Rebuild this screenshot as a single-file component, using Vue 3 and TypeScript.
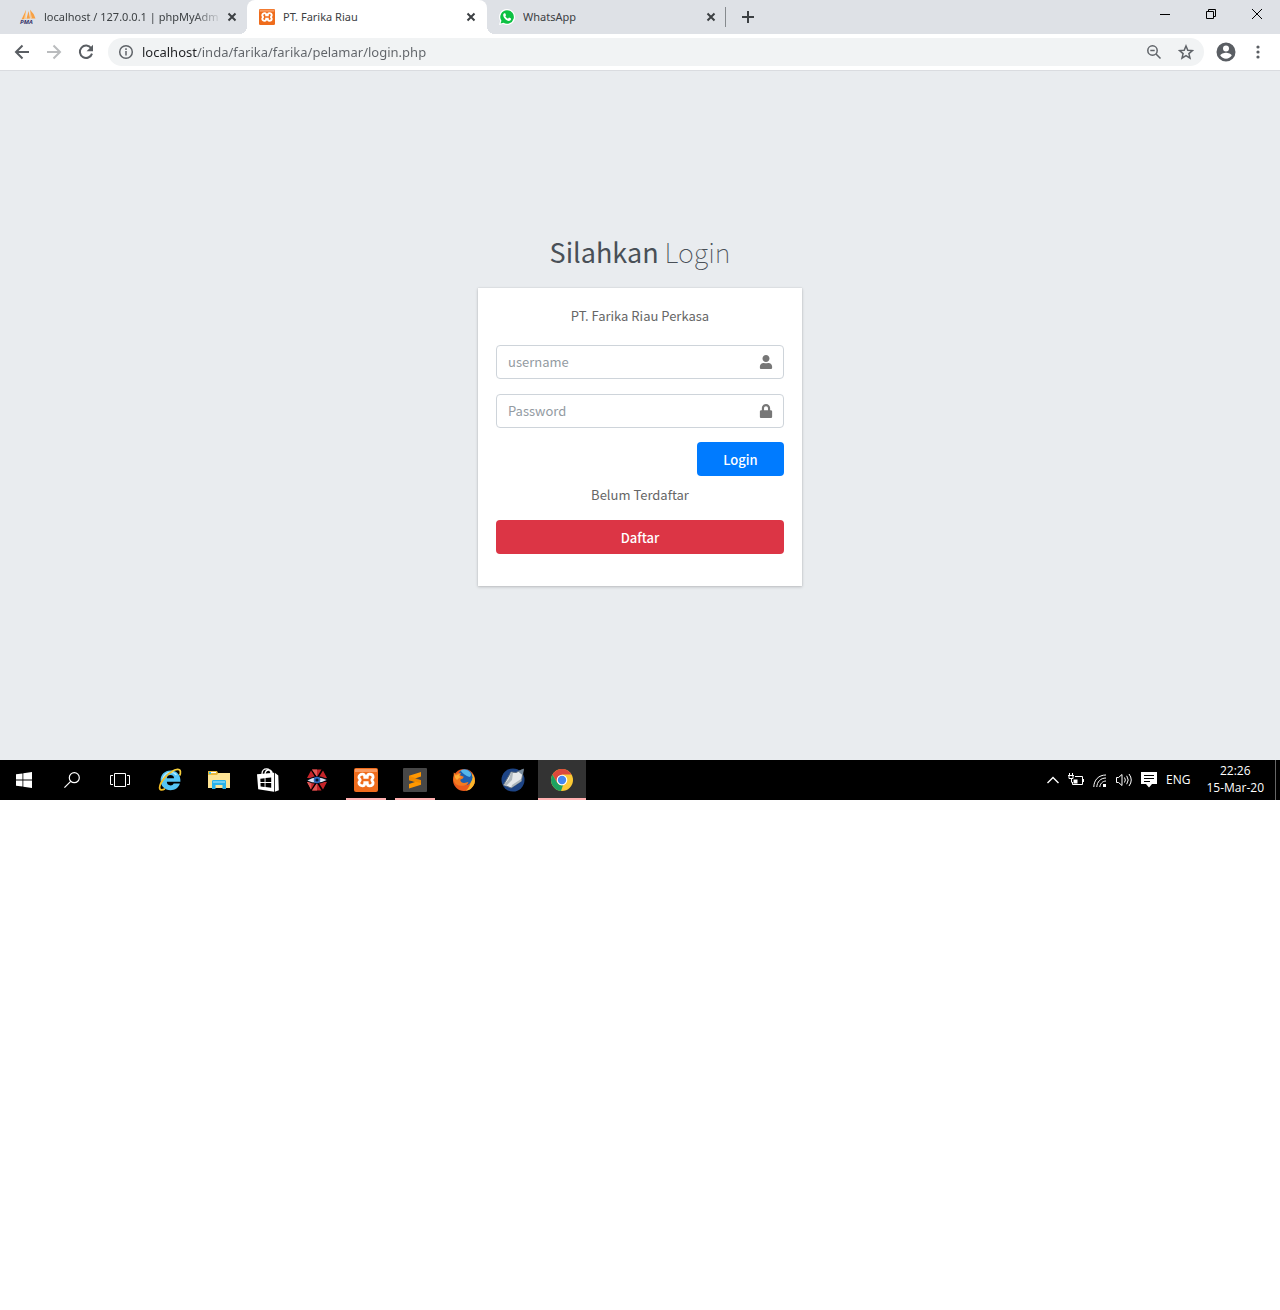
<script setup lang="ts">
import { ref } from 'vue'

const address = ref('localhost/inda/farika/farika/pelamar/login.php')
const username = ref('')
const password = ref('')
</script>

<template>
  <div class="desktop">
    <header class="browser">
      <nav class="tabs" aria-label="Tabs">
        <div class="tab first">
          <svg class="favicon" viewBox="0 0 16 16" aria-hidden="true">
            <path d="M6 1 1.500 10.500 6 9.800zM8.500 2 6.500 9.800 10 9.600zM10 0.800Q14.500 5 15.500 9.600L10.800 9.600z" fill="#f7a043" />
            <path d="M6 1 4 10.200 6 9.800zM10 .8 12 9.600h-1.200z" fill="#fbd09a" />
            <text x="0" y="15" class="pma">PMA</text>
          </svg>
          <a class="title faded" href="#phpmyadmin">localhost / 127.0.0.1 | phpMyAdmin</a>
          <button class="close" type="button" aria-label="Close tab">
            <svg viewBox="0 0 10 10"><path d="M1.500 1.500l7 7m0-7l-7 7" /></svg>
          </button>
        </div>
        <div class="tab active">
          <svg class="favicon" viewBox="0 0 24 24" aria-hidden="true">
            <use href="#xampp" />
          </svg>
          <a class="title" href="#login">PT. Farika Riau</a>
          <button class="close" type="button" aria-label="Close tab">
            <svg viewBox="0 0 10 10"><path d="M1.500 1.500l7 7m0-7l-7 7" /></svg>
          </button>
        </div>
        <div class="tab">
          <svg class="favicon" viewBox="0 0 16 16" aria-hidden="true">
            <path d="M8 0a8 8 0 1 1-3.800 15L0 16l1.100-4A8 8 0 0 1 8 0z" fill="#fff" />
            <path d="M8 1.200a6.800 6.800 0 1 1-3.500 12.600L1.600 14.500l.8-2.800A6.800 6.800 0 0 1 8 1.200z" fill="#0dc143" />
            <path d="M5.300 4.200h.9l.9 2-.8 1.100c.7 1.200 1.500 1.900 2.700 2.400l1-1.100 2 1c.2 1.400-1 2.300-2.200 2.300C7.200 11.700 4.200 8.600 4.200 6c0-.8.500-1.500 1.100-1.800z" fill="#fff" />
          </svg>
          <a class="title" href="#whatsapp">WhatsApp</a>
          <button class="close" type="button" aria-label="Close tab">
            <svg viewBox="0 0 10 10"><path d="M1.500 1.500l7 7m0-7l-7 7" /></svg>
          </button>
        </div>
        <button class="new-tab" type="button" aria-label="New tab">
          <svg viewBox="0 0 12 12"><path d="M6 0v12M0 6h12" /></svg>
        </button>
        <div class="window-controls">
          <button type="button" aria-label="Minimize">
            <svg viewBox="0 0 12 12"><path d="M1 6.500h10" /></svg>
          </button>
          <button type="button" aria-label="Restore">
            <svg viewBox="0 0 12 12"><path d="M1.500 3.500h7v7h-7zM3.500 3.500v-2h7v7h-2" /></svg>
          </button>
          <button type="button" aria-label="Close window">
            <svg viewBox="0 0 12 12"><path d="M1 1l10 10M11 1L1 11" /></svg>
          </button>
        </div>
      </nav>

      <div class="toolbar">
        <button class="tool" type="button" aria-label="Back">
          <svg viewBox="0 0 16 16"><path d="M15 8H2M8.500 1.500L2 8l6.500 6.500" /></svg>
        </button>
        <button class="tool off" type="button" aria-label="Forward" disabled>
          <svg viewBox="0 0 16 16"><path d="M1 8h13M7.500 1.500L14 8l-6.500 6.500" /></svg>
        </button>
        <button class="tool" type="button" aria-label="Reload">
          <svg viewBox="0 0 16 16">
            <path d="M13.200 4.300A6.200 6.200 0 1 0 14 9.600" />
            <path d="M15 .8v6.400H8.600z" fill="#5a5e63" stroke="none" />
          </svg>
        </button>
        <div class="omnibox">
          <svg class="glyph" viewBox="0 0 16 16" aria-hidden="true">
            <circle cx="8" cy="8" r="6.300" />
            <path d="M8 7v4.500M8 4.300v1.600" />
          </svg>
          <input v-model="address" class="address" type="text" aria-label="Address" spellcheck="false" />
          <svg class="glyph" viewBox="0 0 16 16" aria-hidden="true">
            <circle cx="6.500" cy="6.500" r="4.700" />
            <path d="M10 10l4.500 4.500M4.300 6.500h4.400" />
          </svg>
          <svg class="glyph" viewBox="0 0 16 16" aria-hidden="true">
            <path d="M8 2l1.800 4.200 4.600.4-3.500 3 1.100 4.500L8 11.700l-4 2.400 1.100-4.500-3.500-3 4.600-.4z" />
          </svg>
        </div>
        <button class="profile" type="button" aria-label="Profile">
          <svg viewBox="0 0 20 20">
            <path
              fill-rule="evenodd"
              d="M10 .5a9.500 9.500 0 1 0 0 19 9.500 9.500 0 0 0 0-19zM10 3.400a3 3 0 1 1 0 6 3 3 0 0 1 0-6zM10 16.700c-2.400 0-4.500-1.200-5.700-3.100 0-1.900 3.800-2.900 5.700-2.900s5.700 1 5.700 2.900A6.800 6.800 0 0 1 10 16.700z"
            />
          </svg>
        </button>
        <button class="menu" type="button" aria-label="Menu">
          <svg viewBox="0 0 4 16">
            <circle cx="2" cy="3" r="1.600" /><circle cx="2" cy="8" r="1.600" /><circle cx="2" cy="13" r="1.600" />
          </svg>
        </button>
      </div>
    </header>

    <main class="page">
      <h1 class="heading"><b>Silahkan</b> Login</h1>
      <form class="card" @submit.prevent>
        <p class="note">PT. Farika Riau Perkasa</p>
        <label class="field">
          <input v-model="username" type="text" placeholder="username" aria-label="username" />
          <svg viewBox="0 0 448 512" aria-hidden="true">
            <path d="M224 256c70.700 0 128-57.300 128-128S294.700 0 224 0 96 57.300 96 128s57.300 128 128 128zm89.600 32h-16.700c-22.200 10.200-46.900 16-72.900 16s-50.600-5.800-72.900-16h-16.700C60.200 288 0 348.200 0 422.400V464c0 26.500 21.500 48 48 48h352c26.500 0 48-21.500 48-48v-41.600c0-74.200-60.200-134.400-134.400-134.400z" />
          </svg>
        </label>
        <label class="field">
          <input v-model="password" type="password" placeholder="Password" aria-label="Password" />
          <svg viewBox="0 0 448 512" aria-hidden="true">
            <path d="M400 224h-24v-72C376 68.200 307.800 0 224 0S72 68.200 72 152v72H48c-26.500 0-48 21.500-48 48v192c0 26.500 21.500 48 48 48h352c26.500 0 48-21.500 48-48V272c0-26.500-21.500-48-48-48zm-104 0H152v-72c0-39.700 32.300-72 72-72s72 32.300 72 72v72z" />
          </svg>
        </label>
        <button class="btn primary" type="submit">Login</button>
        <p class="note register">Belum Terdaftar</p>
        <button class="btn danger" type="button">Daftar</button>
      </form>
    </main>

    <footer class="taskbar">
      <button class="task" type="button" aria-label="Start">
        <svg width="16" height="16" viewBox="0 0 16 16" fill="#fff">
          <path d="M0 2.300l6.500-.9v6.200H0zM7.300 1.300L16 0v7.600H7.300zM0 8.400h6.500v6.200L0 13.700zM7.300 8.400H16V16l-8.700-1.300z" />
        </svg>
      </button>
      <button class="task" type="button" aria-label="Search">
        <svg width="16" height="16" viewBox="0 0 16 16" fill="none" stroke="#fff" stroke-width="1.200">
          <circle cx="10.300" cy="5.700" r="5" /><path d="M6.700 9.300L.4 15.600" />
        </svg>
      </button>
      <button class="task view" type="button" aria-label="Task view">
        <svg width="20" height="14" viewBox="0 0 20 14" fill="none" stroke="#fff">
          <path d="M4.500.5h11v13h-11zM3 2.500H.5v9H3M17 2.500h2.500v9H17" />
        </svg>
      </button>
      <button class="task" type="button" aria-label="Internet Explorer">
        <svg width="24" height="24" viewBox="0 0 24 24">
          <path d="M12.500 2.500C6.600 2.500 2.600 6.900 2.600 12.300c0 5.700 4 9.900 9.900 9.900 4.500 0 8.200-2.500 9.400-6.700h-6.200c-.6 1.200-1.600 1.900-3.200 1.900-2.200 0-3.600-1.400-3.700-3.600h13.600c.5-6.700-3.400-11.300-9.900-11.300zM8.800 10.200c.3-2 1.600-3.200 3.700-3.200s3.400 1.200 3.600 3.200z" fill="#55c5f5" fill-rule="evenodd" />
          <path d="M4.800 11.500C5.700 7.200 8.700 4.400 12.500 4.400c2.700 0 4.600 1 5.900 2.600" fill="none" stroke="#b5eaff" stroke-width="1.400" />
          <path d="M14.500 3.300C9 6 2 14 1.600 19.500c-.1 3.100 2.700 2.900 5.400 1.300" fill="none" stroke="#f4bd24" stroke-width="1.700" />
          <path d="M13.500 3.700c4.500-3 8.400-3 8.900-.2.200 1.300-.1 2.700-.8 4" fill="none" stroke="#f7cf3c" stroke-width="1.700" />
        </svg>
      </button>
      <button class="task" type="button" aria-label="File Explorer">
        <svg width="22" height="20" viewBox="0 0 22 20">
          <path d="M0 1h9l1 2h12v15H0z" fill="#e9b93c" />
          <path d="M1 2h2v2H1z" fill="#39c1e9" /><path d="M3 2h5v1H3z" fill="#fff" />
          <path d="M0 5h9l1.500-2H22v15H0z" fill="#fde394" />
          <path d="M4 19v-7.500c0-1 .5-1.500 1.500-1.500h11c1 0 1.500.5 1.500 1.500V19h-3.500v-4h-7v4z" fill="#29b2e9" />
          <path d="M5 11h12v2H5z" fill="#6ccef3" />
        </svg>
      </button>
      <button class="task" type="button" aria-label="Store">
        <svg width="22" height="24" viewBox="0 0 22 24">
          <path d="M5 6C5 2.500 7 .9 9.500.9s4 1.600 4.500 4.600M8 6.200C8.200 3.200 9.800 2 11.700 2s3.300 1.200 3.700 4" fill="none" stroke="#fff" stroke-width="1.300" />
          <path d="M0 6.300l17-1.600v19L1.200 21.300zM17.800 4.800l3.500 2.800.5 14.600-4 1.500z" fill="#fff" />
          <path d="M3.300 10.700l4.300-.5v3.900H3.500zM8.500 10.100l5.700-.7v4.700H8.500zM3.500 15h4.100v3.900l-4-.5zM8.500 15h5.700v4.700l-5.700-.7z" fill="#000" />
        </svg>
      </button>
      <button class="task" type="button" aria-label="Viewer">
        <svg width="22" height="22" viewBox="0 0 22 22">
          <path d="M6 0.500h9.500L11 8zM5 1.500L10 9.500 1 9zM17 1.500L21 9l-9 .5zM5 20.500L1 13l9-.5zM17 20.500l-5-8 9 .5zM6 21.500h9.500L11 14z" fill="#c52429" />
          <path d="M6 .5h5V8zM6 21.500l5-7.500v7.500zM5 20.500L1 13l4.500.2z" fill="#de5956" />
          <path d="M0 11.300Q5 7.500 11 7.200t11 3.600Q17 14.600 11 14.800T0 11.300z" fill="#080c18" />
          <path d="M1.500 11.400Q6 8.700 11 8.500t9.500 2.500Q16 13.500 11 13.600T1.500 11.400z" fill="#dce5f4" />
          <circle cx="11" cy="11" r="3.300" fill="#2d69c0" /><circle cx="11" cy="11" r="1.600" fill="#06162e" />
        </svg>
      </button>
      <button class="task running" type="button" aria-label="XAMPP">
        <svg width="24" height="24" viewBox="0 0 24 24">
          <g id="xampp">
            <rect width="24" height="24" rx="2" fill="#ef6c1c" />
            <path d="M1 1h22v3H1z" fill="#f99a60" />
            <path d="M8.500 6.200c2 0 2.300 1.600 2.300 3.100h2.400c0-1.500.3-3.100 2.300-3.100 2 0 3.600 1.100 3.600 3 0 1.500-1.300 1.900-1.300 2.800s1.300 1.300 1.300 2.800c0 1.900-1.600 3-3.600 3-2 0-2.300-1.600-2.300-3.100h-2.400c0 1.500-.3 3.100-2.300 3.100-2 0-3.600-1.100-3.600-3 0-1.500 1.300-1.900 1.300-2.800S4.900 10.700 4.900 9.200c0-1.900 1.600-3 3.600-3z" fill="none" stroke="#fff" stroke-width="2.800" />
          </g>
        </svg>
      </button>
      <button class="task running" type="button" aria-label="Sublime Text">
        <svg width="24" height="24" viewBox="0 0 24 24">
          <rect width="24" height="24" rx="1" fill="#474747" />
          <path d="M18 4v4.500l-6 1.900 6 1.900v4.400L6 20.500V16l6-1.900-6-1.900V7.700z" fill="#ff9800" />
          <path d="M6 7.700l12 4.300v3L6 12.200z" fill="#e07b00" opacity=".5" />
        </svg>
      </button>
      <button class="task" type="button" aria-label="Firefox">
        <svg width="24" height="24" viewBox="0 0 24 24">
          <circle cx="12" cy="12" r="11" fill="#ea5a1c" />
          <path d="M19.500 5q4.500 5 3 10.500-2.500 6.500-9 7.300Q19 18.500 18.500 12z" fill="#fbb62a" />
          <ellipse cx="13" cy="9.300" rx="7.500" ry="8" fill="#1c5fae" />
          <path d="M8.500 2.600Q14-.5 18.500 4.500 20 8 17.500 9 12 7.500 8.500 2.600z" fill="#55b7ea" />
          <path d="M1.800 4.500L4 6.200Q6.200 4.600 9 5L8 7.200l3.800 1.500-1 1.800-2.600 1.300q.6 3.200 4 3.200l4.300-1q-1 3.600-5.500 3.800Q3.500 18.500 1.500 12z" fill="#f47a20" />
          <path d="M2.500 6.500L4 7.500q2-1.500 4-1.500L7 8l2.500 1-2.500 1-2 2q-2.500-2-2.500-5.500z" fill="#fdaf38" />
        </svg>
      </button>
      <button class="task" type="button" aria-label="Editor">
        <svg width="24" height="24" viewBox="0 0 24 24">
          <circle cx="12" cy="12" r="11.500" fill="#1d4485" />
          <path d="M10 4l5 .5L22.500 1l-2 12L10 20l-7.500-3z" fill="#e5e8ea" stroke="#5f6d7b" />
          <path d="M10 4l-2 7-5.500 6 2.500 1 6-6 1-7zM10 20l1-3 9-6 .5 2z" fill="#aeb7bd" />
          <path d="M17 3.500L22.500 1l-1 6z" fill="#778b9d" />
        </svg>
      </button>
      <button class="task current" type="button" aria-label="Chrome">
        <svg width="24" height="24" viewBox="0 0 24 24">
          <circle cx="12" cy="12" r="11" fill="#fbc934" />
          <path d="M2.500 6.500A11 11 0 0 1 21.500 6.500H12L7.200 14.800z" fill="#dc493c" />
          <path d="M2.500 6.500l4.700 8.300A5.500 5.500 0 0 0 13 17.300L11 23A11 11 0 0 1 2.500 6.500z" fill="#1ca261" />
          <circle cx="12" cy="12" r="5.300" fill="#fff" /><circle cx="12" cy="12" r="4.200" fill="#4587ed" />
        </svg>
      </button>

      <div class="tray">
        <svg width="12" height="8" viewBox="0 0 12 8" stroke-width="1.400"><path d="M.5 7L6 1.500 11.500 7" /></svg>
        <svg width="16" height="14" viewBox="0 0 16 14">
          <path d="M7 3.500h7.500v8h-10V9M15.500 6v3M1.500 0v2.500M4.500 0v2.500M0 2.500h6M1 3v2.500h4V3M3.500 5.500v4" />
          <path d="M5.500 6.500h4v4h-4z" fill="#fff" stroke="none" />
        </svg>
        <svg width="14" height="16" viewBox="0 0 14 16">
          <path d="M.8 15C1 8 5.500 3 13 3M3.800 15C4 10 7.500 6 13 6M6.800 15C7 12 9.500 9 13 9" />
          <path d="M10 12h3v3h-3z" fill="#fff" stroke="none" />
        </svg>
        <svg width="16" height="14" viewBox="0 0 16 14">
          <path d="M.5 4.500h2L6 1.500v11l-3.500-3h-2zM8.500 4.500q1.700 2.500 0 5M10.700 2.800q3 4.200 0 8.400M13 1q4.500 6 0 12" />
        </svg>
        <svg width="16" height="16" viewBox="0 0 16 16">
          <path d="M0 0h16v12h-5l-3 3.500L5 12H0z" fill="#fff" stroke="none" />
          <path d="M3 3.500h10M3 6.500h10M3 9.500h6" stroke="#000" />
        </svg>
        <span class="lang">ENG</span>
        <time class="clock" datetime="2020-03-15T22:26">22:26<br />15-Mar-20</time>
      </div>
    </footer>
  </div>
</template>

<style>
body {
  margin: 0;
  background: #fff;
}
</style>

<style scoped>
.desktop {
  font-family: 'Noto Sans', 'Open Sans', sans-serif;
  font-size: 11px;
  color: #3c4043;
}

button {
  display: flex;
  align-items: center;
  justify-content: center;
  padding: 0;
  border: 0;
  background: none;
  font: inherit;
  color: inherit;
}

svg {
  display: block;
  flex: none;
}

.tabs {
  display: flex;
  height: 34px;
  background: #dee1e6;
}

.tab {
  box-sizing: border-box;
  display: flex;
  align-items: center;
  gap: 8px;
  width: 240px;
  padding: 0 11px 0 12px;
}

.tab.first {
  width: 247px;
  padding: 0 10px 0 20px;
}

.tab.active {
  position: relative;
  background: #fff;
  border-radius: 8px 8px 0 0;
}

.tab.active::before,
.tab.active::after {
  content: '';
  position: absolute;
  bottom: 0;
  width: 8px;
  height: 8px;
}

.tab.active::before {
  right: 100%;
  background: radial-gradient(circle at 0 0, #dee1e6 8px, #fff 8px);
}

.tab.active::after {
  left: 100%;
  background: radial-gradient(circle at 100% 0, #dee1e6 8px, #fff 8px);
}

.favicon {
  width: 16px;
  height: 16px;
  overflow: visible;
}

.pma {
  font: italic bold 6px 'Open Sans', sans-serif;
  fill: #34346a;
}

.title {
  flex: 1;
  overflow: hidden;
  white-space: nowrap;
  line-height: 18px;
  color: #3c4043;
  text-decoration: none;
}

.title.faded {
  mask-image: linear-gradient(90deg, #000 150px, transparent 178px);
}

.close svg {
  width: 10px;
  height: 10px;
  fill: none;
  stroke: #3c4043;
  stroke-width: 2;
}

.new-tab {
  align-self: center;
  width: 45px;
  height: 20px;
  border-left: 1px solid #868a8e;
  margin-left: -2px;
}

.new-tab svg {
  width: 12px;
  height: 12px;
  fill: none;
  stroke: #3c4043;
  stroke-width: 2;
}

.window-controls {
  display: flex;
  height: 28px;
  margin-left: auto;
}

.window-controls button {
  width: 46px;
}

.window-controls svg {
  width: 12px;
  height: 12px;
  fill: none;
  stroke: #000;
}

.toolbar {
  display: flex;
  align-items: center;
  height: 36px;
  padding: 0 12px 0 14px;
  background: #fff;
  border-bottom: 1px solid #dadce0;
}

.tool {
  margin-right: 16px;
}

.tool svg {
  width: 16px;
  height: 16px;
  fill: none;
  stroke: #5a5e63;
  stroke-width: 2;
}

.tool.off svg {
  stroke: #babcbe;
}

.omnibox {
  box-sizing: border-box;
  flex: 1;
  display: flex;
  align-items: center;
  gap: 16px;
  height: 28px;
  margin-right: 12px;
  padding: 0 10px;
  background: #f1f3f4;
  border-radius: 14px;
  margin-left: -2px;
}

.glyph {
  width: 16px;
  height: 16px;
  fill: none;
  stroke: #5f6368;
  stroke-width: 1.5;
}

.address {
  flex: 1;
  min-width: 0;
  height: 20px;
  margin-left: -8px;
  padding: 0;
  border: 0;
  outline: 0;
  font: 13px/20px 'Noto Sans', 'Open Sans', sans-serif;
  color: transparent;
  background: linear-gradient(90deg, #202124 55px, #5f6368 55px) text;
}

.profile svg {
  width: 20px;
  height: 20px;
  fill: #5a5e63;
}

.menu {
  width: 20px;
  margin-left: 12px;
}

.menu svg {
  width: 4px;
  height: 16px;
  fill: #5a5e63;
}

.page {
  display: flex;
  flex-direction: column;
  align-items: center;
  padding: 161px 16px 174px;
  background: #e9ecef;
  font-family: 'Noto Sans CJK SC', sans-serif;
  font-size: 13px;
  line-height: 20px;
}

.heading {
  margin: 0 0 16px;
  font-size: 27px;
  line-height: 40px;
  font-weight: 100;
  color: #495057;
}

.heading b {
  font-weight: 400;
}

.card {
  box-sizing: border-box;
  display: flex;
  flex-direction: column;
  width: 100%;
  max-width: 324px;
  padding: 18px 18px 32px;
  background: #fff;
  box-shadow: 0 0 1px rgba(0, 0, 0, 0.13), 0 1px 3px rgba(0, 0, 0, 0.2);
}

.note {
  margin: 0 0 19px;
  text-align: center;
  color: #666;
}

.field {
  box-sizing: border-box;
  display: flex;
  align-items: center;
  height: 34px;
  margin-bottom: 15px;
  padding: 0 10px 0 11px;
  border: 1px solid #ced4da;
  border-radius: 4px;
}

.field input {
  box-sizing: border-box;
  flex: 1;
  min-width: 0;
  height: 32px;
  padding: 0 0 2px;
  border: 0;
  outline: 0;
  background: none;
  font: inherit;
  color: #495057;
}

.field input::placeholder {
  color: #939ba2;
  opacity: 1;
}

.field svg {
  width: 14px;
  height: 14px;
  fill: #777;
}

.btn {
  height: 34px;
  padding-top: 1px;
  border-radius: 4px;
  color: #fff;
  font-weight: 500;
}

.primary {
  align-self: flex-end;
  width: 87px;
  margin: -1px 0 9px;
  background: #007bff;
}

.register {
  margin-bottom: 15px;
}

.danger {
  background: #dc3545;
}

.taskbar {
  display: flex;
  height: 40px;
  background: #000;
}

.task {
  position: relative;
  width: 48px;
  margin-right: 1px;
}

.task:nth-child(-n + 2) {
  margin-right: 0;
}

.task.view {
  margin-right: 2px;
}

.running::after,
.current::after {
  content: '';
  position: absolute;
  right: 4px;
  bottom: 0;
  left: 4px;
  height: 2px;
  background: #ffb0b0;
}

.current {
  background: #333;
}

.current::after {
  right: 0;
  left: 0;
}

.tray {
  display: flex;
  align-items: center;
  gap: 9px;
  margin-left: auto;
  padding-right: 11px;
  margin-right: 4px;
  border-right: 1px solid #666;
  font-family: 'Open Sans', 'Noto Sans', sans-serif;
  font-size: 12px;
  color: #fff;
}

.tray svg {
  fill: none;
  stroke: #fff;
}

.lang,
.clock {
  padding-bottom: 2px;
  line-height: 17px;
}

.clock {
  margin-left: 7px;
  text-align: center;
}
</style>
